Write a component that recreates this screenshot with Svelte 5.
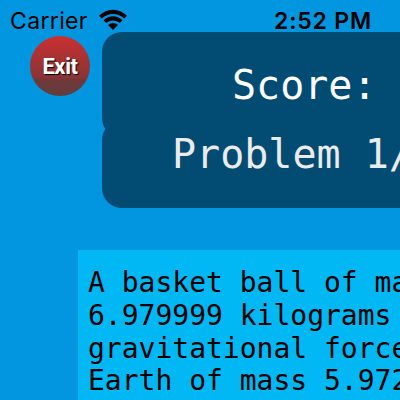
<script>
  const lines = [
    'A basket ball of ma',
    '6.979999 kilograms',
    'gravitational force',
    'Earth of mass 5.972'
  ];
</script>

<main class="screen">
  <header class="status">
    <span class="carrier">Carrier</span>
    <svg class="wifi" width="30" height="22" viewBox="0 0 30 22" aria-hidden="true">
      <path d="M1 6.800C9-1.300 21-1.300 29 6.800L26.200 9.600C20 3.600 10 3.600 3.800 9.600Z" />
      <path d="M5.500 11.300C11 6 19 6 24.500 11.300L21.700 14.100C17.900 10.500 12.100 10.500 8.300 14.100Z" />
      <path d="M10 15.900C12.900 13.200 17.100 13.200 20 15.900L15 20.900Z" />
    </svg>
    <time class="clock">2:52 PM</time>
  </header>
  <div class="top">
    <button class="exit">Exit</button>
    <div class="board">
      <div class="panel score">Score:</div>
      <div class="panel problem">Problem 1/</div>
    </div>
  </div>
  <section class="question">
    {#each lines as line}
      <div class="line">{line}</div>
    {/each}
  </section>
</main>

<style>
  :global(body) {
    margin: 0;
  }
  .screen {
    width: 400px;
    height: 400px;
    overflow: hidden;
    background: #0296e1;
    font-family: 'DejaVu Sans Mono', monospace;
  }
  .status {
    display: flex;
    align-items: flex-start;
    height: 32px;
    font-family: Inter, sans-serif;
    font-size: 23px;
    line-height: 28px;
    color: #000;
    white-space: nowrap;
  }
  .carrier {
    width: 88px;
    padding: 7px 0 0 10px;
    box-sizing: border-box;
    letter-spacing: 0.35px;
  }
  .wifi {
    flex: none;
    margin: 9px 0 0 10px;
  }
  .clock {
    margin: 7px 0 0 146px;
    font-weight: 600;
    letter-spacing: 0.8px;
  }
  .top {
    display: flex;
    align-items: flex-start;
    height: 218px;
  }
  .exit {
    flex: none;
    width: 60px;
    height: 60px;
    margin: 4px 12px 0 30px;
    padding: 1px 0 0;
    border: 0;
    border-radius: 50%;
    background: linear-gradient(#cb3032, #883434 70%, #703839 73%, #623d3d);
    color: #fff;
    font: 700 22px Roboto, sans-serif;
    letter-spacing: -0.4px;
    text-shadow: 1px 1px 1px #000;
  }
  .board {
    flex: none;
    width: 420px;
  }
  .panel {
    box-sizing: border-box;
    border-radius: 20px;
    background: #024c73;
    color: #fff;
    font-size: 40px;
    line-height: 46px;
    white-space: pre;
  }
  .score {
    height: 106px;
    padding: 30px 0 0 130px;
  }
  .problem {
    height: 88px;
    margin-top: -18px;
    padding: 11px 0 0 70px;
    color: #ebebeb;
  }
  .question {
    box-sizing: border-box;
    width: 422px;
    height: 250px;
    margin-left: 78px;
    padding: 17.4px 0 0 10px;
    background: #01b8f4;
    color: #000;
    font-size: 28px;
  }
  .line {
    height: 32.7px;
    line-height: 32.7px;
    white-space: pre;
  }
</style>
